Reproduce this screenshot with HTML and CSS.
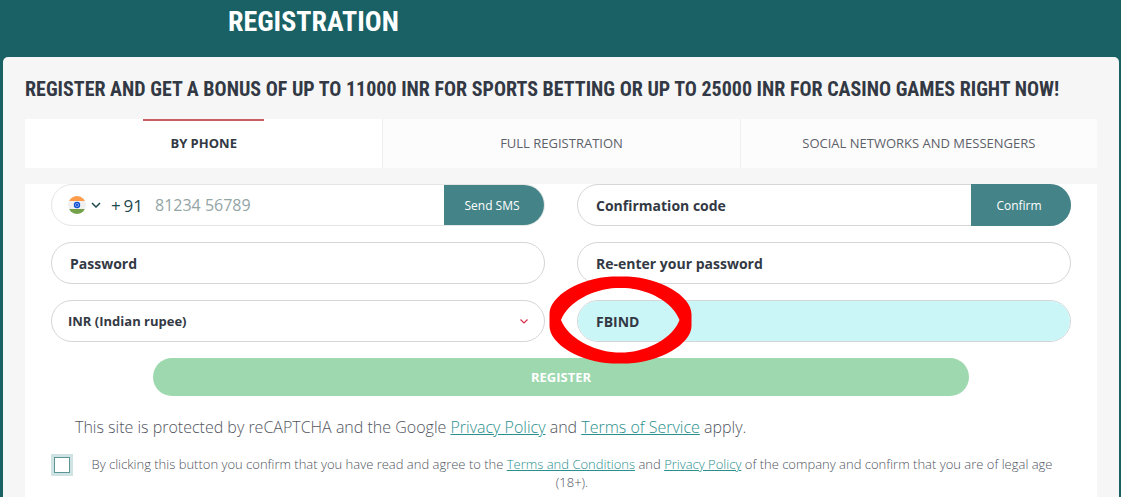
FILE: index.html
```html
<!DOCTYPE html>
<html lang="en">
<head>
  <meta charset="utf-8">
  <meta name="viewport" content="width=device-width, initial-scale=1.0">
  <title>Registration</title>
  <link rel="stylesheet" href="styles.css">
</head>

<body>
  <header class="page-header">
    <h1>Registration</h1>
  </header>
  <main class="panel">
    <h2>Register and get a bonus of up to 11000 INR for sports betting or up to 25000 INR for casino games right now!</h2>
    <nav class="tabs">
      <button type="button" class="tab active">By phone</button>
      <button type="button" class="tab">Full registration</button>
      <button type="button" class="tab">Social networks and messengers</button>
    </nav>
    <form class="form">
      <div class="fields">
        <div class="field phone">
          <button type="button" class="country" aria-label="Country code">
            <svg class="flag" viewBox="0 0 18 18" width="18" height="18">
              <clipPath id="round"><circle cx="9" cy="9" r="9"/></clipPath>
              <g clip-path="url(#round)">
                <rect width="18" height="18" fill="#f0f0f0"/>
                <rect width="18" height="5" fill="#ff9d4a"/>
                <rect y="13" width="18" height="5" fill="#73a048"/>
              </g>
              <circle cx="9" cy="9" r="3.2" fill="#1150d0"/>
              <circle cx="9" cy="9" r="1.6" fill="none" stroke="#9fc0f4" stroke-width=".7"/>
            </svg>
            <svg class="arrow" viewBox="0 0 10 6" width="10" height="6"><path d="M1 1l4 4 4-4" fill="none" stroke="#1f4a50" stroke-width="1.5"/></svg>
            <span>+&thinsp;91</span>
          </button>
          <input type="tel" placeholder="81234 56789" aria-label="Phone number">
          <button type="button" class="action">Send SMS</button>
        </div>
        <div class="field">
          <input type="text" placeholder="Confirmation code" aria-label="Confirmation code">
          <button type="button" class="action">Confirm</button>
        </div>
        <div class="field">
          <input type="password" placeholder="Password" aria-label="Password">
        </div>
        <div class="field">
          <input type="password" placeholder="Re-enter your password" aria-label="Re-enter your password">
        </div>
        <div class="field currency">
          <select aria-label="Currency">
            <option>INR (Indian rupee)</option>
          </select>
          <svg class="arrow" viewBox="0 0 8 5" width="8" height="5"><path d="M.5 .5l3.500 3.500 3.500-3.500" fill="none" stroke="#d8304a" stroke-width="1.200"/></svg>
        </div>
        <div class="field promo">
          <input type="text" value="FBIND" aria-label="Promo code">
          <!-- hand-drawn ring round the promo code -->
          <svg class="ring" viewBox="0 0 144 88" width="144" height="88">
            <path fill="#f00" fill-rule="evenodd" d="M64 .5H80C112 2 143.500 20 143.500 38V50C143.500 68 112 86 80 87.500H64C32 86 1.500 68 1.500 50V38C1.500 20 32 2 64 .5ZM68 12C45 13 20 26 13 44C20 62 45 75 68 76.500H77C100 75 125 62 131.500 44C125 26 100 13 77 12Z"/>
          </svg>
        </div>
      </div>
      <button type="submit" class="register">Register</button>
      <p class="captcha">This site is protected by reCAPTCHA and the Google <a href="#">Privacy Policy</a> and <a href="#">Terms of Service</a> apply.</p>
      <div class="agree">
        <input type="checkbox" id="agree">
        <label for="agree">By clicking this button you confirm that you have read and agree to the <a href="#">Terms and Conditions</a> and <a href="#">Privacy Policy</a> of the company and confirm that you are of legal age (18+).</label>
      </div>
    </form>
  </main>
</body>
</html>
```
FILE: styles.css
```css
* {
  box-sizing: border-box;
}
html {
  background: #1a6165;
}
body {
  margin: 0;
  min-height: 100vh;
  display: flex;
  flex-direction: column;
  color: #333944;
  font-family: "Open Sans", sans-serif;
  font-size: 14px;
}
button, input, select {
  margin: 0;
  border: 0;
  background: none;
  color: inherit;
  font: inherit;
}
button, select {
  cursor: pointer;
}
h1, h2 {
  margin: 0;
  font-family: "Roboto Condensed", "Liberation Sans Narrow", sans-serif;
  font-weight: bold;
  text-transform: uppercase;
}
h1 {
  color: #fff;
  font-size: 28px;
  line-height: 40px;
}
h2 {
  font-size: 20px;
  line-height: 28px;
}
a {
  color: #2b8f8e;
}

.page-header {
  padding: 2px 228px 15px;
}
.panel {
  flex: 1;
  margin: 0 2px 0 3px;
  padding: 18px 22px 0;
  border-radius: 5px 5px 0 0;
  background: #f6f6f6;
  display: flex;
  flex-direction: column;
}

/* tabs */
.tabs {
  display: grid;
  grid-template-columns: repeat(3, 1fr);
  margin: 16px 0;
}
.tab {
  position: relative;
  height: 49px;
  padding: 0 0 2px;
  border-left: 1px solid #efefef;
  background: #fcfcfc;
  color: #5d616a;
  font-size: 13px;
  text-transform: uppercase;
}
.tab.active {
  border-left: 0;
  background: #fff;
  color: #333944;
  font-weight: bold;
}
.tab.active::before {
  content: "";
  position: absolute;
  top: 0;
  left: 33%;
  right: 33%;
  height: 2px;
  background: #c95f62;
}

/* form */
.form {
  flex: 1;
  padding: 0 26px;
  background: #fff;
  display: flex;
  flex-direction: column;
}
.fields {
  display: grid;
  grid-template-columns: 1fr 1fr;
  gap: 16px 32px;
}
.field {
  position: relative;
  display: flex;
  height: 42px;
  border: 1px solid #d6d6d8;
  border-radius: 21px;
  font-weight: bold;
}
.field input, .field select {
  flex: 1;
  min-width: 0;
  padding: 0 18px;
  border-radius: 21px;
  outline: 0;
}
.field input::placeholder {
  color: #333944;
  opacity: 1;
}
.phone {
  border-color: #e4e6e6;
  font-weight: normal;
}
.phone input {
  padding: 0 12px;
  font-size: 16px;
}
.phone input::placeholder {
  color: #93a5a5;
}
.country {
  display: flex;
  align-items: center;
  gap: 5px;
  padding: 0 0 0 16px;
  color: #1f4a50;
  font-size: 17px;
}
.country span {
  margin-left: 5px;
}
.action {
  width: 100px;
  margin: -1px;
  padding: 0 4px 0 0;
  border-radius: 0 21px 21px 0;
  background: #448388;
  color: #fff;
  font-size: 12px;
  font-weight: normal;
}
.phone .action {
  margin: 0;
}
.currency select {
  appearance: none;
  padding: 0 16px;
  font-size: 13px;
}
.currency .arrow {
  position: absolute;
  top: 18px;
  right: 16px;
  pointer-events: none;
}
.promo input {
  background: #cbf6f8;
}
.ring {
  position: absolute;
  top: -25px;
  left: -30px;
  pointer-events: none;
}
.register {
  width: 816px;
  max-width: 100%;
  height: 38px;
  margin: 16px auto 0;
  border-radius: 19px;
  background: #9dd8ae;
  color: #fff;
  font-size: 13px;
  font-weight: bold;
  text-transform: uppercase;
}

/* small print */
.captcha {
  margin: 19px 24px 16px;
  color: #51555e;
  font-size: 16px;
  font-weight: 300;
  line-height: 24px;
}
.agree {
  display: flex;
  align-items: flex-start;
  color: #51555e;
  font-size: 13px;
  font-weight: 300;
  line-height: 18px;
}
.agree input {
  appearance: none;
  flex: none;
  width: 16px;
  height: 16px;
  margin: 2px 3px;
  border: 1px solid #5b9598;
  box-shadow: 0 0 0 3px #cfe3e3;
}
.agree label {
  flex: 1;
  padding: 0 18px;
  text-align: center;
}
```
